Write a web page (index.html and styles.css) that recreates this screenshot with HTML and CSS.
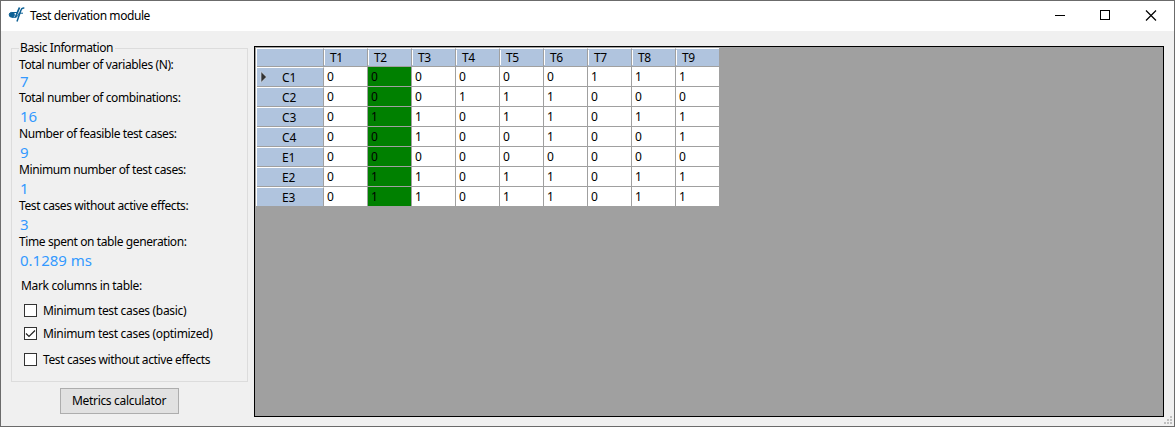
FILE: index.html
```
<!DOCTYPE html>
<html lang="en">
<head>
<meta charset="utf-8">
<title>Test derivation module</title>
<link rel="stylesheet" href="styles.css">
</head>
<body>
<div class="window">
  <header class="titlebar">
    <svg class="logo" width="17" height="18" viewBox="0 0 17 18" fill="none" stroke="#0d6094">
      <ellipse cx="3.800" cy="8.800" rx="2.600" ry="2.400" fill="#0d6094" stroke-width="1"/>
      <path d="M11.500 1.500L7.300 11.500" stroke-width="1.800"/>
      <path d="M16.300 2.200Q13.800 1.500 12.800 4.500L9 15.500" stroke-width="1.500"/>
      <path d="M4 6.500H9M4 11.300H7.500Q9.800 11 11 7.200H15" stroke-width="1"/>
    </svg>
    <span class="title">Test derivation module</span>
    <svg class="controls" width="119" height="29" viewBox="0 0 119 29" fill="none" stroke="#000" shape-rendering="crispEdges">
      <path d="M0 13.500h10"/>
      <rect x="45.500" y="8.500" width="9" height="9"/>
      <path d="M91 8.500l10 10M101 8.500l-10 10" shape-rendering="auto" stroke-width="1.200"/>
    </svg>
  </header>
  <main class="content">
    <section class="side">
      <fieldset class="info">
        <legend>Basic Information</legend>
        <dl class="stats">
          <dt>Total number of variables (N):</dt><dd class="first">7</dd>
          <dt>Total number of combinations:</dt><dd>16</dd>
          <dt>Number of feasible test cases:</dt><dd>9</dd>
          <dt>Minimum number of test cases:</dt><dd>1</dd>
          <dt>Test cases without active effects:</dt><dd>3</dd>
          <dt>Time spent on table generation:</dt><dd>0.1289 ms</dd>
        </dl>
        <p class="mark">Mark columns in table:</p>
        <label class="check c1"><span class="box"></span><span>Minimum test cases (basic)</span></label>
        <label class="check c2"><span class="box"><svg width="11" height="11" viewBox="0 0 11 11" fill="none" stroke="#222" stroke-width="1.200"><path d="M1 5.500L4 8.500L10 2.500"/></svg></span><span>Minimum test cases (optimized)</span></label>
        <label class="check c3"><span class="box"></span><span>Test cases without active effects</span></label>
      </fieldset>
      <button class="metrics">Metrics calculator</button>
    </section>
    <section class="gridview">
      <div class="table">
        <div class="row head"><b></b><i>T1</i><i>T2</i><i>T3</i><i>T4</i><i>T5</i><i>T6</i><i>T7</i><i>T8</i><i>T9</i></div>
        <div class="row"><b><svg class="arrow" width="9" height="12" viewBox="0 0 9 12"><path d="M2 .5v11L7.500 6z" fill="#333" stroke="#e8eef6" stroke-width=".6"/></svg>C1</b><i>0</i><i>0</i><i>0</i><i>0</i><i>0</i><i>0</i><i>1</i><i>1</i><i>1</i></div>
        <div class="row"><b>C2</b><i>0</i><i>0</i><i>0</i><i>1</i><i>1</i><i>1</i><i>0</i><i>0</i><i>0</i></div>
        <div class="row"><b>C3</b><i>0</i><i>1</i><i>1</i><i>0</i><i>1</i><i>1</i><i>0</i><i>1</i><i>1</i></div>
        <div class="row"><b>C4</b><i>0</i><i>0</i><i>1</i><i>0</i><i>0</i><i>1</i><i>0</i><i>0</i><i>1</i></div>
        <div class="row"><b>E1</b><i>0</i><i>0</i><i>0</i><i>0</i><i>0</i><i>0</i><i>0</i><i>0</i><i>0</i></div>
        <div class="row"><b>E2</b><i>0</i><i>1</i><i>1</i><i>0</i><i>1</i><i>1</i><i>0</i><i>1</i><i>1</i></div>
        <div class="row"><b>E3</b><i>0</i><i>1</i><i>1</i><i>0</i><i>1</i><i>1</i><i>0</i><i>1</i><i>1</i></div>
      </div>
    </section>
  </main>
  <svg class="grip" width="8" height="8" viewBox="0 0 8 8" fill="#bfbfbf"><path d="M6 0h2v2h-2zM3 3h2v2h-2zM6 3h2v2h-2zM0 6h2v2h-2zM3 6h2v2h-2zM6 6h2v2h-2z"/></svg>
</div>
</body>
</html>
```
FILE: styles.css
```
* { box-sizing: border-box; }
body { margin: 0; font: 12px/16px "Noto Sans", "Open Sans", sans-serif; color: #000; }
.window { position: relative; width: 1175px; height: 427px; border: 1px solid #6b6b6b; background: #f0f0f0; overflow: hidden; }
.titlebar { display: flex; align-items: flex-start; height: 30px; background: #fff; padding: 0 0 0 7px; }
.logo { margin-top: 5px; }
.title { margin: 7px 0 0 5px; letter-spacing: -.42px; white-space: nowrap; }
.controls { margin: 1px 0 0 auto; }
.content { display: flex; }
.side { width: 243px; padding: 9px 0 0 10px; margin-right: 10px; }
.info { position: relative; width: 237px; height: 342px; margin: 0; padding: 0 0 0 7px; border: 1px solid #dcdcdc; }
.info legend { height: 16px; padding: 0 2px 0 1px; line-height: 16px; letter-spacing: -.42px; }
.stats { margin: 1px 0 0; white-space: nowrap; }
.stats dt { height: 16px; letter-spacing: -.4px; }
.stats dd { margin: 0 0 0 1px; height: 20px; font-size: 15px; line-height: 20px; color: #3399ff; }
.stats dd.first { height: 17px; line-height: 16px; }
.mark { margin: 8px 0 0 2px; letter-spacing: -.34px; }
.check { display: flex; align-items: flex-start; gap: 6px; height: 16px; margin-left: 5px; letter-spacing: -.32px; white-space: nowrap; }
.c1 { margin-top: 9px; }
.c2 { margin-top: 7px; }
.c3 { margin-top: 10px; letter-spacing: -.38px; }
.box { display: flex; width: 13px; height: 13px; margin-top: 1px; border: 1px solid #333; background: #fff; }
.metrics { display: block; width: 119px; height: 26px; margin: 6px 0 0 49px; padding: 0 1px 1px 0; border: 1px solid #adadad; background: #e1e1e1; color: #000; font: inherit; letter-spacing: -.32px; }
.gridview { width: 910px; height: 371px; margin-top: 15px; padding: 1px; border: 1px solid #000; background: #a0a0a0; }
.table { width: 463px; border-left: 1px solid #fff; }
.row { display: grid; grid-template-columns: 67px repeat(8, 44px) 43px; height: 20px; }
.row b, .row i { font-weight: 400; font-style: normal; height: 20px; border-right: 1px solid #a0a0a0; border-bottom: 1px solid #a0a0a0; background: #fff; line-height: 19px; }
.row i { padding-left: 3px; }
.row i:last-child { border-right: 0; }
.row b { position: relative; padding-left: 25px; background: #b0c4de; border-top: 1px solid #fff; letter-spacing: -.2px; }
.row:last-child b, .row:last-child i { border-bottom: 0; height: 19px; }
.row:last-child { height: 19px; }
.row:not(.head) i:nth-child(3) { background: #008000; }
.arrow { position: absolute; left: 2px; top: 3px; }
.head { height: 19px; }
.row.head b, .row.head i { height: 19px; background: #b0c4de; border-top: 1px solid #fff; line-height: 18px; }
.row.head i { position: relative; padding-left: 6px; letter-spacing: -.3px; }
.row.head i::before { content: ""; position: absolute; left: 0; top: 1px; width: 1px; height: 15px; background: #fff; }
.grip { position: absolute; right: 2px; bottom: 2px; }
```
